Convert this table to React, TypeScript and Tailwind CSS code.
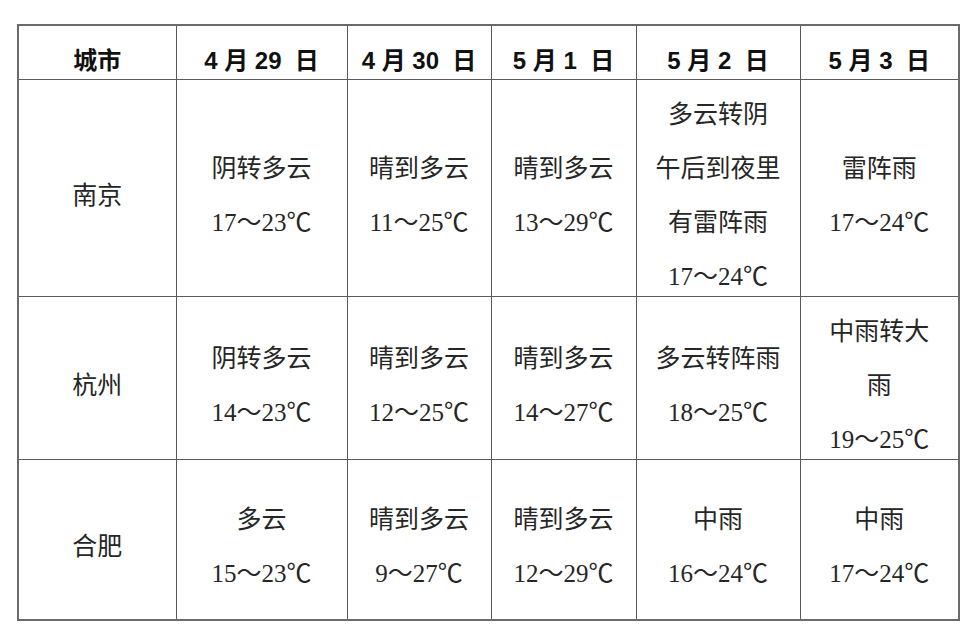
import React from "react";

const cols = [
  { label: "城市", w: "w-[158px]" },
  { label: "4 月 29  日", w: "w-[171px]" },
  { label: "4 月 30  日", w: "w-[144px]" },
  { label: "5 月 1  日", w: "w-[145px]" },
  { label: "5 月 2  日", w: "w-[164px]" },
  { label: "5 月 3  日", w: "w-[159px]" },
];

const rows = [
  {
    city: "南京",
    h: "h-[214px]",
    cells: [
      ["阴转多云", "17～23℃"],
      ["晴到多云", "11～25℃"],
      ["晴到多云", "13～29℃"],
      ["多云转阴", "午后到夜里", "有雷阵雨", "17～24℃"],
      ["雷阵雨", "17～24℃"],
    ],
  },
  {
    city: "杭州",
    h: "h-[161px]",
    cells: [
      ["阴转多云", "14～23℃"],
      ["晴到多云", "12～25℃"],
      ["晴到多云", "14～27℃"],
      ["多云转阵雨", "18～25℃"],
      ["中雨转大", "雨", "19～25℃"],
    ],
  },
  {
    city: "合肥",
    h: "h-[160px]",
    cells: [
      ["多云", "15～23℃"],
      ["晴到多云", "9～27℃"],
      ["晴到多云", "12～29℃"],
      ["中雨", "16～24℃"],
      ["中雨", "17～24℃"],
    ],
  },
];

function Lines({ lines }: { lines: string[] }) {
  return (
    <div className="flex flex-col items-center justify-center">
      {lines.map((l, i) => (
        <div key={i} className="h-[54px] pt-[16px] leading-[38px] whitespace-nowrap">
          {l}
        </div>
      ))}
    </div>
  );
}

export default function App() {
  return (
    <div className="w-[967px] h-[643px] bg-white pl-[17px] pt-[24px]">
      <table className="table-fixed border-collapse border-2 border-[#6a6a6a] text-[#262626] font-['Liberation_Serif','Noto_Sans_CJK_SC',serif] text-[25px]">
        <thead>
          <tr className="h-[54px]">
            {cols.map((c) => (
              <th
                key={c.label}
                className={`${c.w} border-[1.5px] border-[#5a5a5a] p-0 align-top font-bold text-[24px] text-[#111] font-['Liberation_Sans','Noto_Sans_CJK_SC',sans-serif] whitespace-pre`}
              >
                <div className="h-[53px] pt-[19px] leading-[32px]">{c.label}</div>
              </th>
            ))}
          </tr>
        </thead>
        <tbody>
          {rows.map((r) => (
            <tr key={r.city} className={r.h}>
              <td className="border-[1.5px] border-[#5a5a5a] p-0 align-middle text-center">
                <Lines lines={[r.city]} />
              </td>
              {r.cells.map((c, i) => (
                <td key={i} className="border-[1.5px] border-[#5a5a5a] p-0 align-middle text-center">
                  <Lines lines={c} />
                </td>
              ))}
            </tr>
          ))}
        </tbody>
      </table>
    </div>
  );
}
